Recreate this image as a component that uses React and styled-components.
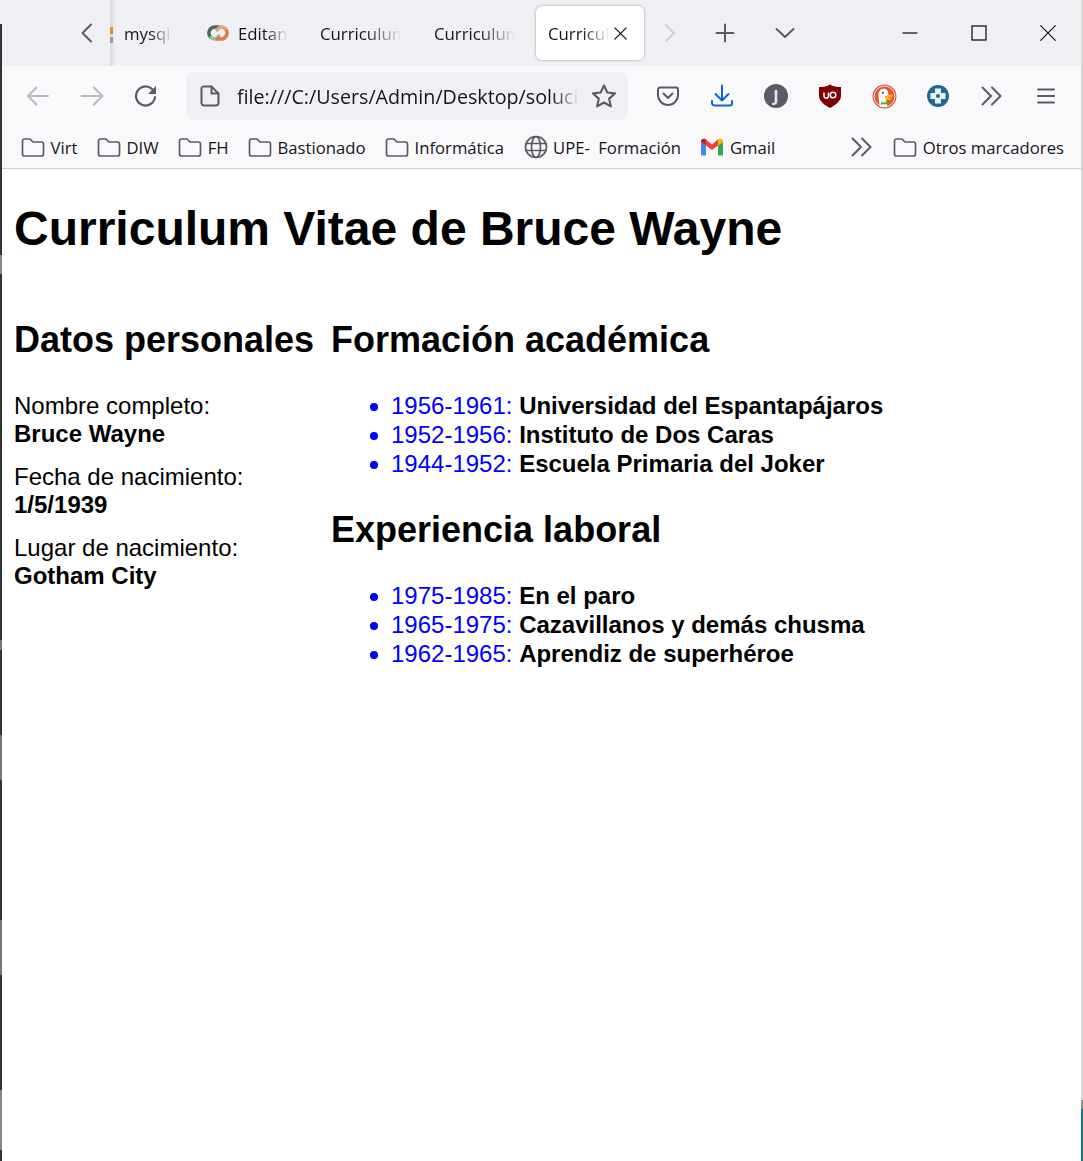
import React from "react";
import styled, { createGlobalStyle } from "styled-components";

const GlobalStyle = createGlobalStyle`
  html, body {
    margin: 0;
    padding: 0;
    background: #fff;
  }
  * {
    box-sizing: border-box;
  }
`;

const UI_FONT = `"Open Sans", "Noto Sans", sans-serif`;
const INK = "#5b5b66";

/* ---------- icons ---------- */
const Svg = ({ size = 24, color = INK, sw = 2, children }) => (
  <svg
    width={size}
    height={size}
    viewBox="0 0 24 24"
    fill="none"
    stroke={color}
    strokeWidth={sw}
    strokeLinecap="round"
    strokeLinejoin="round"
  >
    {children}
  </svg>
);

const ChevronLeft = ({ color }) => (
  <Svg color={color}>
    <path d="M18 3.5 L9.5 12 L18 20.5" />
  </Svg>
);
const ChevronRight = ({ color }) => (
  <Svg color={color}>
    <path d="M8 4 L16 12 L8 20" />
  </Svg>
);
const ChevronDown = () => (
  <Svg>
    <path d="M3.5 8 L12 16 L20.5 8" />
  </Svg>
);
const Plus = () => (
  <Svg>
    <path d="M12 3.5 V20.5 M3.5 12 H20.5" />
  </Svg>
);
const Close = ({ size = 24, sw = 1.6, color = "#15141a" }) => (
  <Svg size={size} sw={sw} color={color}>
    <path d="M4 4 L20 20 M20 4 L4 20" />
  </Svg>
);
const ArrowLeft = ({ color }) => (
  <Svg color={color}>
    <path d="M22 12 H2 M10.5 3.5 L2 12 L10.5 20.5" />
  </Svg>
);
const ArrowRight = ({ color }) => (
  <Svg color={color}>
    <path d="M1.5 12 H22.5 M14 3.5 L22.5 12 L14 20.5" />
  </Svg>
);
const Reload = () => (
  <Svg sw={2.2}>
    <path d="M21 13 A9.5 9.5 0 1 1 18 5" />
    <path d="M22 2 V10 H14 Z" fill={INK} stroke="none" />
  </Svg>
);
const Doc = () => (
  <Svg>
    <path d="M5.5 2.5 H13.5 L20.5 9.5 V19 A2.5 2.5 0 0 1 18 21.5 H6 A2.5 2.5 0 0 1 3.5 19 V4.5 A2 2 0 0 1 5.5 2.5 Z" />
    <path d="M13.5 2.5 V9.5 H20.5" />
  </Svg>
);
const Star = () => (
  <Svg size={26}>
    <path d="M12 2.2 L15 8.8 L22.2 9.6 L16.8 14.4 L18.3 21.6 L12 18 L5.7 21.6 L7.2 14.4 L1.8 9.6 L9 8.8 Z" />
  </Svg>
);
const Pocket = () => (
  <Svg>
    <path d="M4 3.5 H20 A2 2 0 0 1 22 5.5 V11 A10 10 0 0 1 2 11 V5.5 A2 2 0 0 1 4 3.5 Z" />
    <path d="M7.5 9.5 L12 14 L16.5 9.5" />
  </Svg>
);
const Download = () => (
  <Svg color="#0a64d8">
    <path d="M12 1.5 V16 M5.5 10 L12 16.5 L18.5 10" />
    <path d="M2 17 V19 A2.5 2.5 0 0 0 4.5 21.5 H19.5 A2.5 2.5 0 0 0 22 19 V17" />
  </Svg>
);
const Overflow = () => (
  <Svg>
    <path d="M2.5 3.5 L11 12 L2.5 20.5 M12 3.5 L20.5 12 L12 20.5" />
  </Svg>
);
const Burger = () => (
  <Svg>
    <path d="M4 5.5 H20 M4 12 H20 M4 18.5 H20" />
  </Svg>
);
const Minimize = () => (
  <Svg sw={1.3} color="#15141a">
    <path d="M4.5 12 H19.5" strokeLinecap="butt" />
  </Svg>
);
const Maximize = () => (
  <Svg sw={1.3} color="#15141a">
    <rect x="5" y="5" width="14" height="14" strokeLinejoin="miter" />
  </Svg>
);
const Folder = () => (
  <Svg color="#5b5b66" sw={1.7}>
    <path d="M3.5 4 H9 L12 7 H20.5 A2 2 0 0 1 22.5 9 V19 A2 2 0 0 1 20.5 21 H3.5 A2 2 0 0 1 1.5 19 V6 A2 2 0 0 1 3.5 4 Z" />
  </Svg>
);
const Globe = () => (
  <Svg sw={1.7}>
    <circle cx="12" cy="12" r="10.5" />
    <ellipse cx="12" cy="12" rx="4.5" ry="10.5" />
    <path d="M2 8.5 H22 M2 15.5 H22" />
  </Svg>
);
const Gmail = () => (
  <svg width="24" height="24" viewBox="0 0 24 24" fill="none">
    <path d="M1 7 V20.5 H6 V10.5 Z" fill="#4285f4" />
    <path d="M18 10.5 V20.5 H23 V7 Z" fill="#34a853" />
    <path d="M1 7 C1 4 4 3 6 4.5 L12 9.5 L18 4.5 C20 3 23 4 23 7 L18 10.5 L12 15 L6 10.5 Z" fill="#ea4335" />
    <path d="M18 4.5 C20 3 23 4 23 7 L18 10.5 Z" fill="#fbbc04" />
    <path d="M1 7 C1 4 4 3 6 4.5 V10.5 Z" fill="#c5221f" />
  </svg>
);
const SwirlLogo = () => (
  <svg width="24" height="24" viewBox="0 0 24 24" fill="none" strokeWidth="3.5" strokeLinecap="round">
    <path d="M13 6 H8.5 A6 6 0 0 0 4.5 16" stroke="#4d6a62" />
    <path d="M5 16.5 A6 6 0 0 0 8.5 18 H10 L13 15" stroke="#8cc0a6" />
    <path d="M11 18 H15.5 A6 6 0 0 0 19.5 8" stroke="#e07a4a" />
    <path d="M19 7.5 A6 6 0 0 0 15.5 6 H14 L11 9" stroke="#e8a36e" />
  </svg>
);
const UBlock = () => (
  <svg width="24" height="24" viewBox="0 0 24 24" fill="none">
    <path d="M12 0.5 C15 2.5 18 3 23 3 V12 C23 17 17 21.5 12 24 C7 21.5 1 17 1 12 V3 C6 3 9 2.5 12 0.5 Z" fill="#800000" />
    <path d="M6 8.5 V12 A2.2 2.2 0 0 0 10.4 12 V8.5" stroke="#fff" strokeWidth="1.5" />
    <circle cx="15" cy="11" r="2.8" stroke="#fff" strokeWidth="1.5" />
  </svg>
);
const DuckDuckGo = () => (
  <svg width="25" height="25" viewBox="0 0 24 24" fill="none">
    <circle cx="12" cy="12" r="11.5" fill="#de5833" />
    <circle cx="12" cy="12" r="10" stroke="#fff" strokeWidth="0.8" />
    <path d="M7.5 22 C7 16 5.5 12 6.5 8 C7.5 4.5 12 3.5 14.5 6 C15.5 7 15.8 9 15.8 11 L13.5 16 L15 22 Z" fill="#fff" />
    <path d="M12.5 11.5 L20 9.8 L19.5 12.5 L15.5 13.2 L19 13.8 L18 15.5 L12.5 14.5 Z" fill="#fdb813" />
    <path d="M8.5 17 L11 18 L15 16.5 L15.5 19.5 L11 19.5 L8.5 20 Z" fill="#4caf3a" />
    <circle cx="10.5" cy="8.5" r="1" fill="#2d4f8e" />
  </svg>
);
const PlusBadge = () => (
  <svg width="24" height="24" viewBox="0 0 24 24" fill="none">
    <circle cx="12" cy="12" r="11" fill="#1d6a96" />
    <path d="M9 4.5 H15 V9 H19.5 V15 H15 V19.5 H9 V15 H4.5 V9 H9 Z" fill="#e8f2f7" />
    <circle cx="12" cy="12" r="2" fill="#1d6a96" />
  </svg>
);

/* ---------- browser chrome ---------- */
const Shell = styled.div`
  position: relative;
  width: 1083px;
  height: 1161px;
  overflow: hidden;
  background: #fff;
`;

// strips of the desktop behind the window, at both sides of the capture
const LeftEdge = styled.div`
  position: absolute;
  left: 0;
  top: 24px;
  bottom: 0;
  width: 2px;
  background: linear-gradient(
    to bottom,
    #333 0 231px,
    #888 231px 250px,
    #333 250px 616px,
    #777 616px 626px,
    #333 626px 711px,
    #777 711px 756px,
    #333 756px 896px,
    #777 896px 951px,
    #333 951px 1066px,
    #888 1066px 1126px,
    #333 1126px
  );
`;

const RightEdge = styled.div`
  position: absolute;
  right: 0;
  top: 0;
  bottom: 0;
  width: 2px;
  background: linear-gradient(
    to bottom,
    #d9d9d9 0 1100px,
    #8c8c8c 1100px 1109px,
    #1b7688 1109px
  );
`;

const TabStrip = styled.div`
  display: flex;
  align-items: center;
  height: 66px;
  padding: 0 1px 0 60px;
  background: #f0f0f4;
  font-family: ${UI_FONT};
  font-size: 16.8px;
  color: #15141a;
`;

const StripButton = styled.div`
  display: flex;
  flex: none;
  align-items: center;
  justify-content: center;
  width: ${(p) => p.$w || 54}px;
  height: 66px;
  margin-right: ${(p) => p.$after || 0}px;
`;

const ScrollDivider = styled.div`
  position: relative;
  flex: none;
  width: 5px;
  height: 66px;
  background: linear-gradient(to right, #dcdce0, #ececf0);
  &::before {
    content: "";
    position: absolute;
    left: 0;
    top: 27px;
    width: 3px;
    height: 7px;
    background: #f08a24;
  }
  &::after {
    content: "";
    position: absolute;
    left: 0;
    top: 37px;
    width: 3px;
    height: 6px;
    background: #9a9aa0;
  }
`;

const Tab = styled.div`
  display: flex;
  flex: none;
  align-items: center;
  gap: 8px;
  width: ${(p) => p.$w}px;
  height: 54px;
  padding-left: ${(p) => p.$pad || 12}px;
`;

const ActiveTab = styled(Tab)`
  padding-left: 12px;
  gap: 2px;
  background: #fff;
  border-radius: 6px;
  box-shadow: 0 0 3px rgba(0, 0, 0, 0.35);
`;

const TabLabel = styled.span`
  display: block;
  width: ${(p) => p.$w}px;
  overflow: hidden;
  white-space: nowrap;
  mask-image: linear-gradient(to right, #000 55%, transparent 100%);
`;

const WindowControls = styled.div`
  display: flex;
  margin-left: auto;
`;

const WindowButton = styled.div`
  display: flex;
  align-items: center;
  justify-content: center;
  width: 69px;
  height: 66px;
`;

const Toolbar = styled.div`
  display: flex;
  align-items: center;
  height: 61px;
  padding: 0 10px 1px 11px;
  background: #f9f9fb;
  font-family: ${UI_FONT};
`;

const ToolButton = styled.div`
  display: flex;
  flex: none;
  align-items: center;
  justify-content: center;
  width: 54px;
  height: 48px;
`;

const UrlBar = styled.div`
  display: flex;
  flex: none;
  align-items: center;
  width: 442px;
  height: 48px;
  margin: 0 13px;
  padding: 0 11px 0 12px;
  background: #f0f0f4;
  border-radius: 8px;
`;

const UrlText = styled.span`
  width: 343px;
  margin-left: 15px;
  margin-right: 12px;
  overflow: hidden;
  white-space: nowrap;
  font-size: 19.7px;
  color: #15141a;
  mask-image: linear-gradient(to right, #000 92%, transparent 100%);
`;

const Avatar = styled.span`
  display: flex;
  align-items: center;
  justify-content: center;
  width: 24px;
  height: 24px;
  border-radius: 50%;
  background: #5b5b66;
  color: #e8e8ee;
  font-size: 16px;
  font-weight: 700;
`;

const Bookmarks = styled.div`
  display: flex;
  align-items: center;
  gap: 19.5px;
  height: 42px;
  padding: 0 19px 1px 21px;
  background: #f9f9fb;
  border-bottom: 1px solid #cfcfd8;
  font-family: ${UI_FONT};
  font-size: 16.7px;
  color: #15141a;
`;

const Bookmark = styled.div`
  display: flex;
  flex: none;
  align-items: center;
  gap: 5.5px;
  white-space: nowrap;
  word-spacing: ${(p) => p.$spread || 0}px;
`;

const BookmarkEnd = styled.div`
  display: flex;
  align-items: center;
  gap: 19px;
  margin-left: auto;
`;

/* ---------- the page itself ---------- */
const Page = styled.main`
  padding: 0 0 0 14px;
  font-family: "Liberation Sans", Arial, sans-serif;
  font-size: 24px;
  color: #000;
`;

const Title = styled.h1`
  margin: 32px 0;
  font-size: 48px;
  line-height: 55px;
  font-weight: 700;
`;

const Columns = styled.div`
  display: grid;
  grid-template-columns: 317px 1fr;
`;

const Heading = styled.h2`
  margin: 31px 0;
  font-size: 36px;
  line-height: 41px;
  font-weight: 700;
  white-space: nowrap;
`;

const Detail = styled.p`
  margin: 0 0 14px;
  padding-top: 1px;
  line-height: 28px;
  strong {
    display: block;
  }
`;

const DateList = styled.ul`
  margin: 0;
  padding-left: 60px;
  list-style: none;
  color: #00f;
  strong {
    color: #000;
  }
  li {
    line-height: 29px;
  }
  li::before {
    content: "";
    display: inline-block;
    width: 8px;
    height: 8px;
    margin-left: -21px;
    margin-right: 13px;
    border-radius: 50%;
    background: currentColor;
    vertical-align: 3px;
  }
`;

const education = [
  ["1956-1961:", "Universidad del Espantapájaros"],
  ["1952-1956:", "Instituto de Dos Caras"],
  ["1944-1952:", "Escuela Primaria del Joker"],
];

const jobs = [
  ["1975-1985:", "En el paro"],
  ["1965-1975:", "Cazavillanos y demás chusma"],
  ["1962-1965:", "Aprendiz de superhéroe"],
];

const details = [
  ["Nombre completo:", "Bruce Wayne"],
  ["Fecha de nacimiento:", "1/5/1939"],
  ["Lugar de nacimiento:", "Gotham City"],
];

const folders = ["Virt", "DIW", "FH", "Bastionado", "Informática"];

const Entries = ({ items }) => (
  <DateList>
    {items.map(([when, what]) => (
      <li key={when}>
        {when} <strong>{what}</strong>
      </li>
    ))}
  </DateList>
);

export default function App() {
  return (
    <Shell>
      <GlobalStyle />
      <TabStrip>
        <StripButton $w={50}>
          <ChevronLeft />
        </StripButton>
        <ScrollDivider />
        <Tab $w={79} $pad={9}>
          <TabLabel $w={48}>mysql</TabLabel>
        </Tab>
        <Tab $w={114} $pad={12}>
          <SwirlLogo />
          <TabLabel $w={50}>Editando</TabLabel>
        </Tab>
        <Tab $w={114}>
          <TabLabel $w={82}>Curriculum</TabLabel>
        </Tab>
        <Tab $w={114}>
          <TabLabel $w={82}>Curriculum</TabLabel>
        </Tab>
        <ActiveTab $w={108}>
          <TabLabel $w={62}>Curriculum</TabLabel>
          <Close size={17} sw={1.8} />
        </ActiveTab>
        <StripButton $w={52} $after={2}>
          <ChevronRight color="#d0d0d6" />
        </StripButton>
        <StripButton $after={6}>
          <Plus />
        </StripButton>
        <StripButton>
          <ChevronDown />
        </StripButton>
        <WindowControls>
          <WindowButton>
            <Minimize />
          </WindowButton>
          <WindowButton>
            <Maximize />
          </WindowButton>
          <WindowButton>
            <Close size={22} sw={1.3} />
          </WindowButton>
        </WindowControls>
      </TabStrip>

      <Toolbar>
        <ToolButton>
          <ArrowLeft color="#b9b9bf" />
        </ToolButton>
        <ToolButton>
          <ArrowRight color="#b9b9bf" />
        </ToolButton>
        <ToolButton>
          <Reload />
        </ToolButton>
        <UrlBar>
          <Doc />
          <UrlText>file:///C:/Users/Admin/Desktop/soluciones</UrlText>
          <Star />
        </UrlBar>
        <ToolButton>
          <Pocket />
        </ToolButton>
        <ToolButton>
          <Download />
        </ToolButton>
        <ToolButton>
          <Avatar>J</Avatar>
        </ToolButton>
        <ToolButton>
          <UBlock />
        </ToolButton>
        <ToolButton>
          <DuckDuckGo />
        </ToolButton>
        <ToolButton>
          <PlusBadge />
        </ToolButton>
        <ToolButton>
          <Overflow />
        </ToolButton>
        <ToolButton>
          <Burger />
        </ToolButton>
      </Toolbar>

      <Bookmarks>
        {folders.map((name) => (
          <Bookmark key={name}>
            <Folder />
            {name}
          </Bookmark>
        ))}
        <Bookmark $spread={4}>
          <Globe />
          UPE- Formación
        </Bookmark>
        <Bookmark>
          <Gmail />
          Gmail
        </Bookmark>
        <BookmarkEnd>
          <Overflow />
          <Bookmark>
            <Folder />
            Otros marcadores
          </Bookmark>
        </BookmarkEnd>
      </Bookmarks>

      <Page>
        <Title>Curriculum Vitae de Bruce Wayne</Title>
        <Columns>
          <section>
            <Heading>Datos personales</Heading>
            {details.map(([label, value]) => (
              <Detail key={label}>
                {label}
                <strong>{value}</strong>
              </Detail>
            ))}
          </section>
          <section>
            <Heading>Formación académica</Heading>
            <Entries items={education} />
            <Heading>Experiencia laboral</Heading>
            <Entries items={jobs} />
          </section>
        </Columns>
      </Page>
      <LeftEdge />
      <RightEdge />
    </Shell>
  );
}
